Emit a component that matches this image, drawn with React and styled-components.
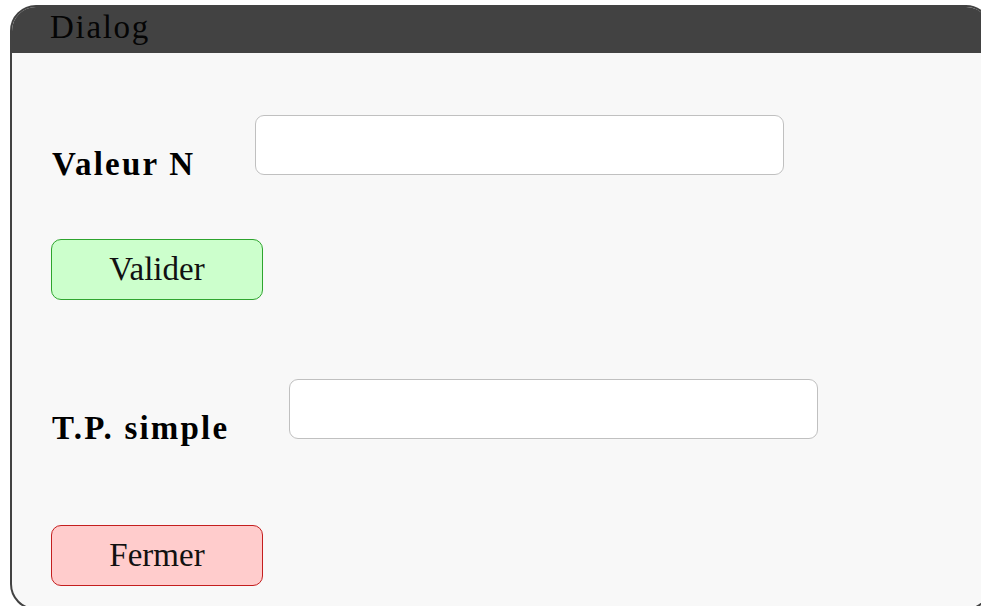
import React, { useState } from 'react';
import styled, { createGlobalStyle } from 'styled-components';

const GlobalStyle = createGlobalStyle`
  html, body {
    margin: 0;
    padding: 0;
    background: #ffffff;
    overflow: hidden;
  }
  body {
    font-family: 'Liberation Serif', 'Times New Roman', serif;
    color: #000;
  }
`;

const tones = {
  ok: { bg: '#ccffcc', border: '#2ea52e' },
  cancel: { bg: '#ffcccc', border: '#c41e1e' },
};

function App() {
  const [valeur, setValeur] = useState('');
  const [simple, setSimple] = useState('');

  return (
    <>
      <GlobalStyle />
      <Screen>
        <Window>
          <TitleBar>Dialog</TitleBar>
          <Body>
            <Field>
              <Label>Valeur N</Label>
              <TextInput
                type='text'
                value={valeur}
                onChange={(e) => setValeur(e.target.value)}
              />
            </Field>
            <Action $tone='ok' $top={64}>
              Valider
            </Action>
            <Field $top={79}>
              <Label>T.P. simple</Label>
              <TextInput
                type='text'
                value={simple}
                onChange={(e) => setSimple(e.target.value)}
              />
            </Field>
            <Action $tone='cancel' $top={86}>
              Fermer
            </Action>
          </Body>
        </Window>
      </Screen>
    </>
  );
}

// the window runs past the right and bottom edges, so the screen clips it
const Screen = styled.div`
  display: flex;
  align-items: flex-start;
  width: 981px;
  height: 606px;
  overflow: hidden;
  padding: 5px 0 0 10px;
  box-sizing: border-box;
`;

const Window = styled.div`
  box-sizing: border-box;
  flex: 0 0 982px;
  width: 982px;
  height: 605px;
  border: 2px solid #424242;
  border-radius: 26px;
  background: #f8f8f8;
  overflow: hidden;
  display: flex;
  flex-direction: column;
`;

const TitleBar = styled.div`
  background: #424242;
  color: #050505;
  font-size: 33px;
  letter-spacing: 1.7px;
  line-height: 40px;
  padding: 0 0 6px 38px;
`;

const Body = styled.div`
  display: flex;
  flex-direction: column;
  align-items: flex-start;
  padding: 62px 0 0 40px;
`;

const Field = styled.div`
  display: flex;
  align-items: flex-end;
  gap: 60px;
  margin-top: ${({ $top }) => $top || 0}px;
`;

const Label = styled.label`
  font-weight: bold;
  font-size: 33px;
  letter-spacing: 2.2px;
  line-height: 1;
  margin-bottom: -6px;
`;

const TextInput = styled.input`
  box-sizing: border-box;
  width: 529px;
  height: 60px;
  margin: 0;
  padding: 0 12px;
  border: 1px solid #c0c0c0;
  border-radius: 9px;
  background: #fff;
  font: inherit;
  font-size: 28px;
  outline: none;
`;

const Action = styled.button`
  box-sizing: border-box;
  width: 212px;
  height: 61px;
  margin: ${({ $top }) => $top}px 0 0 -1px;
  padding: 0;
  border: 1px solid ${({ $tone }) => tones[$tone].border};
  border-radius: 10px;
  background: ${({ $tone }) => tones[$tone].bg};
  color: #111;
  font-family: 'Liberation Serif', 'Times New Roman', serif;
  font-size: 33px;
  line-height: 1;
  cursor: pointer;
`;

export default App;
